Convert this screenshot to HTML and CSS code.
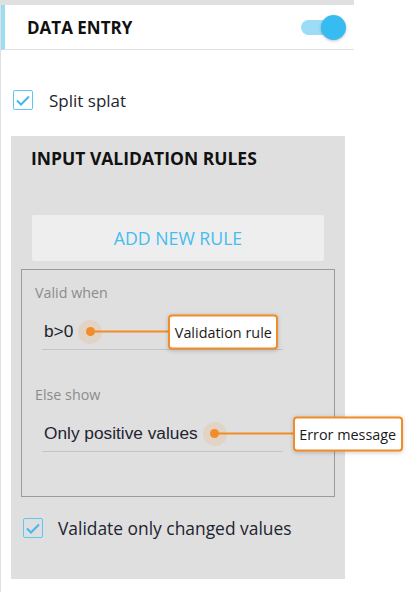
FILE: index.html
```html
<!DOCTYPE html>
<html lang="en">
<head>
  <meta charset="UTF-8">
  <title>Data entry</title>
  <link rel="stylesheet" href="styles.css">
</head>
<body>
<div class="sidebar">
  <div class="header">
    <h2 class="header-title">DATA ENTRY</h2>
    <div class="toggle on">
      <span class="toggle-track"></span>
      <span class="toggle-knob"></span>
    </div>
  </div>

  <label class="check-row split">
    <span class="checkbox">
      <svg width="14" height="11" viewBox="0 0 14 11"><path d="M1 5.5 L5 9.5 L13 1.5" fill="none" stroke="#3fb9ee" stroke-width="2"/></svg>
    </span>
    <span class="check-label">Split splat</span>
  </label>

  <div class="panel">
    <h3 class="panel-title">INPUT VALIDATION RULES</h3>
    <button class="add-rule">ADD NEW RULE</button>

    <div class="rule-box">
      <div class="field">
        <div class="field-label">Valid when</div>
        <div class="field-value">
          <span>b&gt;0</span>
          <span class="pin">
            <span class="pin-dot"></span>
            <span class="callout">
              <span class="callout-line"></span>
              <span class="callout-box">Validation rule</span>
            </span>
          </span>
        </div>
      </div>
      <div class="field">
        <div class="field-label">Else show</div>
        <div class="field-value">
          <span>Only positive values</span>
          <span class="pin">
            <span class="pin-dot"></span>
            <span class="callout">
              <span class="callout-line"></span>
              <span class="callout-box">Error message</span>
            </span>
          </span>
        </div>
      </div>
    </div>

    <label class="check-row changed">
      <span class="checkbox">
        <svg width="14" height="11" viewBox="0 0 14 11"><path d="M1 5.5 L5 9.5 L13 1.5" fill="none" stroke="#3fb9ee" stroke-width="2"/></svg>
      </span>
      <span class="check-label">Validate only changed values</span>
    </label>
  </div>
</div>
</body>
</html>
```

FILE: styles.css
```css
body {
  margin: 0;
  background: #fff;
  font-family: "Open Sans", sans-serif;
  color: #1e2430;
}

.sidebar {
  width: 353px;
  height: 587px;
  border-top: 5px solid #e0e0e0;
  border-left: 1px solid #e0e0e0;
}

.header {
  height: 44px;
  display: flex;
  align-items: center;
  justify-content: space-between;
  border-left: 4px solid #9cdcf5;
  border-bottom: 1px solid #e0e0e0;
  padding: 0 8px 0 22px;
}

.header-title {
  margin: 0;
  font-size: 17px;
  font-weight: 700;
  color: #111;
}

.toggle {
  position: relative;
  width: 45px;
  height: 25px;
}

.toggle-track {
  position: absolute;
  left: 0;
  top: 5px;
  width: 34px;
  height: 15px;
  border-radius: 8px;
  background: #9cdcf6;
}

.toggle-knob {
  position: absolute;
  right: 0;
  top: 0;
  width: 25px;
  height: 25px;
  border-radius: 50%;
  background: #36bcf1;
  box-shadow: 0 1px 3px rgba(0, 0, 0, 0.25);
}

.check-row {
  display: flex;
  align-items: center;
  font-size: 17.4px;
}

.checkbox {
  width: 18px;
  height: 18px;
  border: 1px solid #5ec8f4;
  border-radius: 2px;
  display: flex;
  align-items: center;
  justify-content: center;
}

.split {
  margin: 39px 0 0 12px;
  height: 22px;
  font-size: 17px;
}

.split .check-label {
  margin-left: 16px;
}

.panel {
  margin: 25px 0 0 10px;
  width: 334px;
  height: 443px;
  background: #dfdfdf;
  padding-top: 1px;
  box-sizing: border-box;
}

.panel-title {
  margin: 9px 0 0 20px;
  font-size: 17.5px;
  font-weight: 700;
  color: #111;
}

.add-rule {
  display: block;
  margin: 45px 0 0 21px;
  width: 292px;
  height: 46px;
  border: none;
  border-radius: 2px;
  background: #eeeeee;
  font-family: "Open Sans", sans-serif;
  font-size: 17.7px;
  color: #45bdf0;
}

.rule-box {
  margin: 8px 0 0 10px;
  width: 314px;
  height: 228px;
  border: 1px solid #9b9b9b;
  padding-top: 13px;
  box-sizing: border-box;
}

.field {
  padding-left: 13px;
  margin-bottom: 35px;
}

.field-label {
  font-size: 14.3px;
  line-height: 19px;
  color: #8c8c8c;
}

.field-value {
  display: flex;
  align-items: center;
  margin: 12px 0 0 7px;
  padding-left: 2px;
  width: 239px;
  height: 35px;
  border-bottom: 1px solid #c4c4c4;
  font-family: "Liberation Sans", Arial, sans-serif;
  font-size: 17.3px;
}

.pin {
  position: relative;
  margin-left: 5px;
  width: 24px;
  height: 24px;
  border-radius: 50%;
  background: rgba(242, 140, 40, 0.14);
  display: flex;
  align-items: center;
  justify-content: center;
}

.pin-dot {
  width: 9px;
  height: 9px;
  border-radius: 50%;
  background: #f28c28;
}

.callout {
  position: absolute;
  left: 12px;
  top: 50%;
  display: flex;
  align-items: center;
  transform: translateY(-50%);
  z-index: 2;
}

.callout-line {
  width: 78px;
  height: 2px;
  background: #f28c28;
}

.callout-box {
  white-space: nowrap;
  width: 110px;
  height: 35px;
  box-sizing: border-box;
  display: flex;
  align-items: center;
  justify-content: center;
  border: 2px solid #f28c28;
  border-radius: 4px;
  background: #fff;
  box-shadow: 0 1px 4px rgba(0, 0, 0, 0.18);
  font-family: "Open Sans", sans-serif;
  font-size: 14.4px;
  color: #1a1a1a;
}

.changed {
  margin: 20px 0 0 12px;
  height: 22px;
}

.changed .check-label {
  margin-left: 15px;
}
```
